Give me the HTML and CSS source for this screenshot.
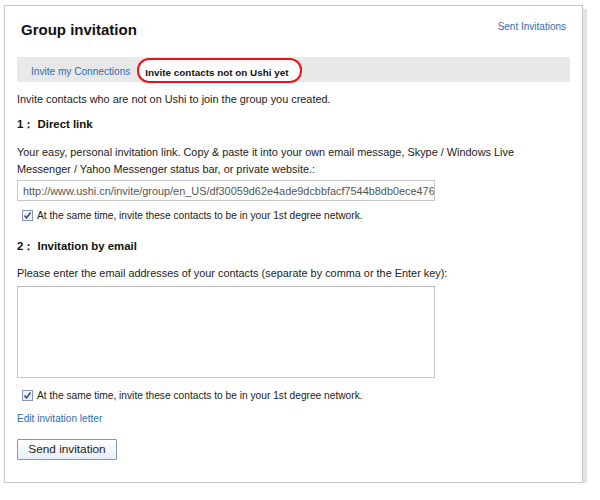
FILE: index.html
```html
<!DOCTYPE html>
<html>
<head>
<meta charset="utf-8">
<link rel="stylesheet" href="styles.css">
</head>
<body>
<div class="panel">
  <div class="header">
    <h1 class="title">Group invitation</h1>
    <a class="link sent">Sent Invitations</a>
  </div>
  <div class="tabs">
    <span class="tab">Invite my Connections</span>
    <span class="tab active">Invite contacts not on Ushi yet</span>
  </div>
  <p class="intro">Invite contacts who are not on Ushi to join the group you created.</p>
  <h2 class="step">1：&nbsp;Direct link</h2>
  <p class="desc">Your easy, personal invitation link. Copy &amp; paste it into your own email message, Skype / Windows Live Messenger / Yahoo Messenger status bar, or private website.:</p>
  <input class="urlbox" type="text" readonly value="http://www.ushi.cn/invite/group/en_US/df30059d62e4ade9dcbbfacf7544b8db0ece476b">
  <label class="check"><span class="box"><svg width="9" height="9" viewBox="0 0 9 9"><path d="M1.5 4.5 L3.5 7 L7.5 1.5" fill="none" stroke="#3a4f8a" stroke-width="1.6"/></svg></span>At the same time, invite these contacts to be in your 1st degree network.</label>
  <h2 class="step step2">2：&nbsp;Invitation by email</h2>
  <p class="desc2">Please enter the email addresses of your contacts (separate by comma or the Enter key):</p>
  <div class="textarea"></div>
  <label class="check check2"><span class="box"><svg width="9" height="9" viewBox="0 0 9 9"><path d="M1.5 4.5 L3.5 7 L7.5 1.5" fill="none" stroke="#3a4f8a" stroke-width="1.6"/></svg></span>At the same time, invite these contacts to be in your 1st degree network.</label>
  <a class="link edit">Edit invitation letter</a>
  <div class="btnrow"><button class="send">Send invitation</button></div>
</div>
</body>
</html>
```
FILE: styles.css
```css
html, body { margin: 0; padding: 0; background: #fff; }
body { font-family: Arial, "Liberation Sans", sans-serif; font-size: 10.9px; color: #222; }
.panel {
  margin: 5px 0 0 4px;
  width: 553px;
  height: 476px;
  border: 1px solid #c8c8c8;
  box-shadow: 4px 4px 0 #e4e4e4;
  padding: 0 12px;
  display: flex;
  flex-direction: column;
}
.header { display: flex; justify-content: space-between; align-items: flex-start; height: 51px; }
.title { margin: 13px 0 0 4px; font-size: 15px; font-weight: bold; color: #111; line-height: 22px; }
.link { color: #2f6db5; text-decoration: none; }
.sent { margin: 14px 4px 0 0; line-height: 14px; font-size: 10px; }
.tabs { background: #e8e8e8; height: 25px; display: flex; align-items: center; padding-left: 14px; gap: 7px; font-size: 10.1px; }
.tab { color: #2f6db5; padding-top: 4px; }
.active {
  color: #111; font-weight: bold; background: #fff; font-size: 9.9px;
  border: 2px solid #e8141b; border-radius: 12px; box-sizing: border-box; height: 25px;
  display: flex; align-items: center; align-self: flex-start;
  padding: 3px 11px 0 6px; margin-top: 1px;
}
.intro { margin: 10px 0 0 0; line-height: 14px; }
.step { margin: 11px 0 0 0; font-size: 11.4px; font-weight: bold; line-height: 15px; color: #111; }
.desc { margin: 12px 0 0 0; line-height: 17px; width: 510px; }
.urlbox {
  margin: 2px 0 0 0; width: 418px; height: 21px; border: 1px solid #c9c9c9; box-sizing: border-box;
  color: #555; padding: 0 0 0 5px; font-family: Arial, "Liberation Sans", sans-serif; font-size: 10.9px;
  outline: none; background: #fff;
}
.check { display: flex; align-items: center; margin: 8px 0 0 5px; line-height: 13px; font-size: 10.2px; }
.box {
  width: 9px; height: 9px; border: 1px solid #8a95b0; background: #eef0f6;
  display: inline-flex; margin-right: 4px;
}
.step2 { margin-top: 17px; }
.desc2 { margin: 12px 0 0 0; line-height: 14px; }
.textarea { margin-top: 6px; width: 416px; height: 90px; border: 1px solid #c9c9c9; border-top-color: #bbb; }
.check2 { margin-top: 11px; }
.edit { margin-top: 10px; line-height: 14px; display: block; font-size: 10.1px; }
.btnrow { margin-top: 13px; }
.send {
  width: 100px; height: 21px; border: 1px solid #7a98c0; border-radius: 1px;
  background: linear-gradient(#ffffff, #e8eef8); font-family: Arial, "Liberation Sans", sans-serif;
  font-size: 11.8px; color: #222; padding: 0; line-height: 19px;
}
```
